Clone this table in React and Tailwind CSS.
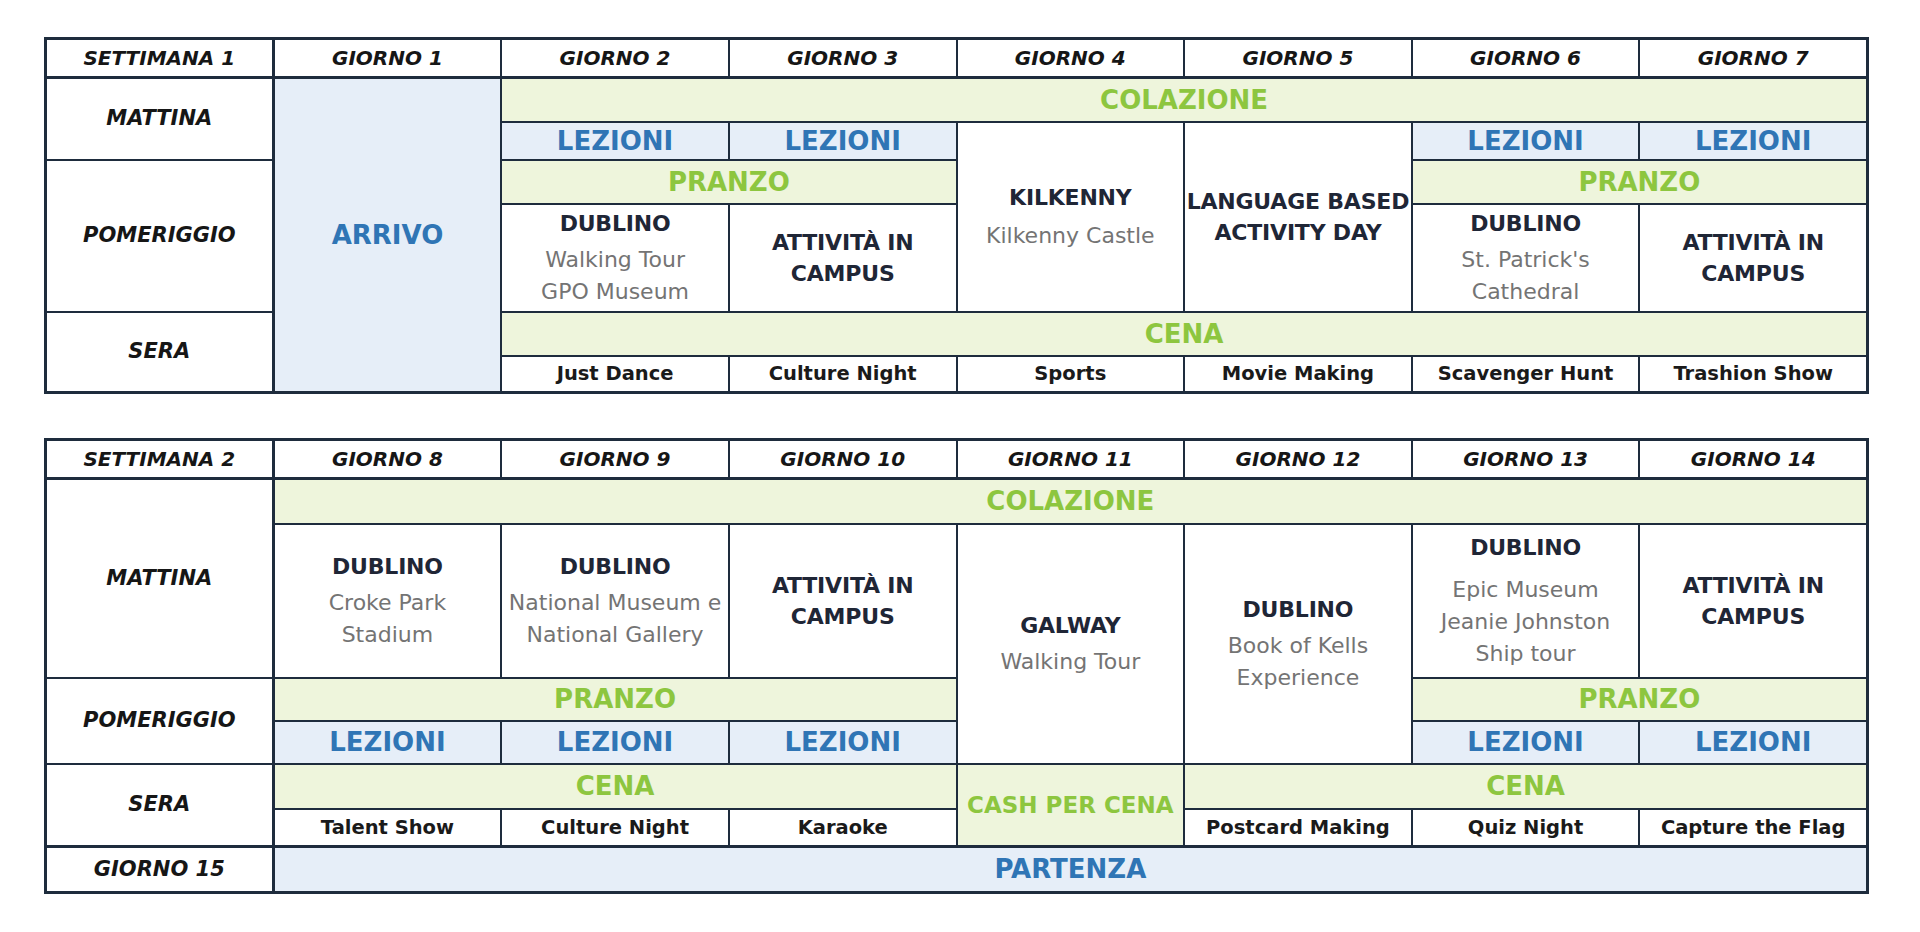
import React from "react";

const LINE = "bg-[#1e2c3d]";

function Head({ children, first }) {
  return (
    <div
      className={
        "flex items-center justify-center bg-white border-b border-[#1e2c3d] text-[20px] font-bold italic text-[#161616] " +
        (first ? "border-r" : "")
      }
    >
      {children}
    </div>
  );
}

function Side({ children, className = "" }) {
  return (
    <div className={"flex items-center justify-center bg-white border-r border-[#1e2c3d] text-[21px] font-bold italic text-[#161616] " + className}>
      {children}
    </div>
  );
}

function Green({ children, className = "" }) {
  return (
    <div className={"flex items-center justify-center whitespace-nowrap bg-[#eef5dc] font-bold text-[#8dc63f] " + (className.includes("text-[") ? "" : "text-[26px] ") + className}>
      {children}
    </div>
  );
}

function Blue({ children, className = "" }) {
  return (
    <div className={"flex items-center justify-center bg-[#e6eef8] text-[26px] font-bold text-[#2f75b5] " + className}>
      {children}
    </div>
  );
}

function Trip({ title, lines = [], className = "", gap = "mt-[5px]" }) {
  return (
    <div className={"flex flex-col items-center justify-center bg-white text-center " + className}>
      {title.map((t) => (
        <div key={t} className="whitespace-nowrap text-[22px] font-bold leading-[31px] tracking-[-0.2px] text-[#1f2636]">{t}</div>
      ))}
      {lines.length > 0 && (
        <div className={gap}>
          {lines.map((l) => (
            <div key={l} className="text-[22px] leading-[32px] text-[#747474]">{l}</div>
          ))}
        </div>
      )}
    </div>
  );
}

function Act({ children }) {
  return (
    <div className="flex items-center justify-center bg-white text-[19.5px] font-bold text-[#1a1a1a]">
      {children}
    </div>
  );
}

const CAMPUS = ["ATTIVITÀ IN", "CAMPUS"];

function Week1() {
  return (
    <div className={"grid grid-cols-8 grid-rows-[37px_42px_36px_42px_106px_42px_34px] gap-[2px] border-[3px] border-[#1e2c3d] " + LINE}>
      <Head first>SETTIMANA 1</Head>
      {[1, 2, 3, 4, 5, 6, 7].map((n) => (
        <Head key={n}>GIORNO {n}</Head>
      ))}

      <Side className="row-span-2">MATTINA</Side>
      <Blue className="row-span-6">ARRIVO</Blue>
      <Green className="col-span-6">COLAZIONE</Green>

      <Blue>LEZIONI</Blue>
      <Blue>LEZIONI</Blue>
      <Trip className="row-span-3" title={["KILKENNY"]} lines={["Kilkenny Castle"]} gap="mt-[7px]" />
      <Trip className="row-span-3" title={["LANGUAGE BASED", "ACTIVITY DAY"]} />
      <Blue>LEZIONI</Blue>
      <Blue>LEZIONI</Blue>

      <Side className="row-span-2">POMERIGGIO</Side>
      <Green className="col-span-2">PRANZO</Green>
      <Green className="col-span-2">PRANZO</Green>

      <Trip title={["DUBLINO"]} lines={["Walking Tour", "GPO Museum"]} />
      <Trip title={CAMPUS} />
      <Trip title={["DUBLINO"]} lines={["St. Patrick's", "Cathedral"]} />
      <Trip title={CAMPUS} />

      <Side className="row-span-2">SERA</Side>
      <Green className="col-span-6">CENA</Green>

      {["Just Dance", "Culture Night", "Sports", "Movie Making", "Scavenger Hunt", "Trashion Show"].map((a) => (
        <Act key={a}>{a}</Act>
      ))}
    </div>
  );
}

function Week2() {
  return (
    <div className={"grid grid-cols-8 grid-rows-[37px_43px_152px_41px_41px_43px_35px_44px] gap-[2px] border-[3px] border-[#1e2c3d] " + LINE}>
      <Head first>SETTIMANA 2</Head>
      {[8, 9, 10, 11, 12, 13, 14].map((n) => (
        <Head key={n}>GIORNO {n}</Head>
      ))}

      <Side className="row-span-2">MATTINA</Side>
      <Green className="col-span-7">COLAZIONE</Green>

      <Trip title={["DUBLINO"]} lines={["Croke Park", "Stadium"]} />
      <Trip title={["DUBLINO"]} lines={["National Museum e", "National Gallery"]} />
      <Trip title={CAMPUS} />
      <Trip className="row-span-3" title={["GALWAY"]} lines={["Walking Tour"]} />
      <Trip className="row-span-3" title={["DUBLINO"]} lines={["Book of Kells", "Experience"]} />
      <Trip title={["DUBLINO"]} lines={["Epic Museum", "Jeanie Johnston", "Ship tour"]} gap="mt-[11px]" />
      <Trip title={CAMPUS} />

      <Side className="row-span-2">POMERIGGIO</Side>
      <Green className="col-span-3">PRANZO</Green>
      <Green className="col-span-2">PRANZO</Green>

      <Blue>LEZIONI</Blue>
      <Blue>LEZIONI</Blue>
      <Blue>LEZIONI</Blue>
      <Blue>LEZIONI</Blue>
      <Blue>LEZIONI</Blue>

      <Side className="row-span-2">SERA</Side>
      <Green className="col-span-3">CENA</Green>
      <Green className="row-span-2 text-[23px]">CASH PER CENA</Green>
      <Green className="col-span-3">CENA</Green>

      {["Talent Show", "Culture Night", "Karaoke", "Postcard Making", "Quiz Night", "Capture the Flag"].map((a) => (
        <Act key={a}>{a}</Act>
      ))}

      <Side className="border-t">GIORNO 15</Side>
      <Blue className="col-span-7 border-t border-[#1e2c3d]">PARTENZA</Blue>
    </div>
  );
}

export default function App() {
  return (
    <div className="min-h-screen bg-white pt-[37px] pl-[44px] font-['DejaVu_Sans',sans-serif]">
      <div className="flex w-[1825px] flex-col gap-[44px]">
        <Week1 />
        <Week2 />
      </div>
    </div>
  );
}
